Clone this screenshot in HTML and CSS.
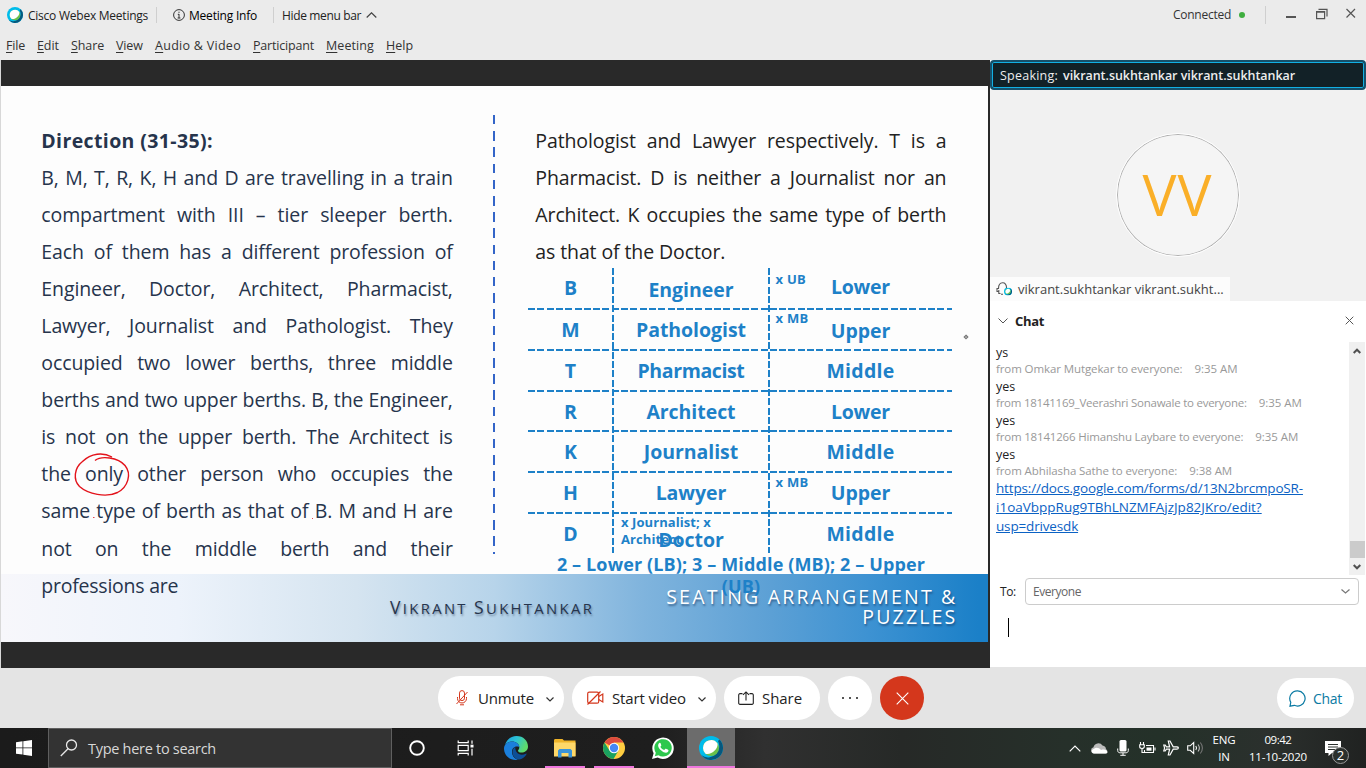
FILE: index.html
```
<!DOCTYPE html>
<html lang="en">
<head>
<meta charset="utf-8">
<title>Cisco Webex Meetings</title>
<link rel="stylesheet" href="styles.css">
</head>
<body>
<svg width="0" height="0" class="defs" aria-hidden="true">
  <defs>
    <linearGradient id="edgeA" x1="0" y1="0" x2="1" y2=".4"><stop offset="0" stop-color="#1b9de2"/><stop offset=".5" stop-color="#2cc3d5"/><stop offset="1" stop-color="#5fdc6a"/></linearGradient>
    <symbol id="webex" viewBox="0 0 24 24">
      <circle cx="12" cy="12" r="12" fill="#00bceb"/>
      <path d="M20.500 3.500A12 12 0 1 1 2.500 19.300A11 11 0 0 0 17 18A11 11 0 0 0 19 5z" fill="#07577d"/>
      <circle cx="12" cy="12" r="8" fill="#6cc04a"/>
      <path d="M4 12A8 8 0 0 1 18.500 7.500C19.500 13 12 19.500 6.500 17.800A8 8 0 0 1 4 12z" fill="#fff"/>
    </symbol>
  </defs>
</svg>

<header class="top">
  <div class="titlebar">
    <svg class="logo" width="16" height="16"><use href="#webex"/></svg>
    <span class="app">Cisco Webex Meetings</span>
    <i class="sep"></i>
    <svg class="info" width="12" height="12" viewBox="0 0 12 12" fill="none" stroke="#333"><circle cx="6" cy="6" r="5.400"/><path d="M6 5v4.200M6 2.700v1.200M4.800 5.300H6M4.600 9h2.800"/></svg>
    <span class="minfo">Meeting Info</span>
    <i class="sep"></i>
    <span class="hide">Hide menu bar</span>
    <svg width="11" height="6" viewBox="0 0 11 6" fill="none" stroke="#444" stroke-width="1.200"><path d="M.7 5.500 5.500.8l4.800 4.700"/></svg>
    <div class="window-state">
      <span class="connected">Connected</span><i class="online"></i><i class="sep wide"></i>
      <svg width="76" height="16" viewBox="0 0 76 16" fill="none" stroke="#555" stroke-width="1.200"><path d="M3 11h10" stroke-width="2"/><path d="M33.600 5.600h8v7h-8zM33 6.200h9M35.500 3.300h8.500v7.200" /><path d="m63.500 3 8.500 8.500m0-8.500-8.500 8.500"/></svg>
    </div>
  </div>
  <nav class="menu">
    <span class="m-file"><u>F</u>ile</span><span class="m-edit"><u>E</u>dit</span><span class="m-share"><u>S</u>hare</span><span class="m-view"><u>V</u>iew</span><span class="m-audio"><u>A</u>udio &amp; Video</span><span class="m-part"><u>P</u>articipant</span><span class="m-meet"><u>M</u>eeting</span><span class="m-help"><u>H</u>elp</span>
  </nav>
</header>

<main class="main">
  <section class="stage">
    <article class="slide">
      <div class="slide-body">
        <div class="col left">
          <p class="heading">Direction (31-35):</p>
          <p>B, M, T, R, K, H and D are travelling in a train</p>
          <p>compartment with III – tier sleeper berth.</p>
          <p>Each of them has a different profession of</p>
          <p>Engineer, Doctor, Architect, Pharmacist,</p>
          <p>Lawyer, Journalist and Pathologist. They</p>
          <p>occupied two lower berths, three middle</p>
          <p>berths and two upper berths. B, the Engineer,</p>
          <p>is not on the upper berth. The Architect is</p>
          <p>the <span class="only">only</span> other person who occupies the</p>
          <p>same type of berth as that of B. M and H are</p>
          <p>not on the middle berth and their</p>
          <p class="last">professions are</p>
        </div>
        <div class="divider"></div>
        <div class="col right">
          <p>Pathologist and Lawyer respectively. T is a</p>
          <p>Pharmacist. D is neither a Journalist nor an</p>
          <p>Architect. K occupies the same type of berth</p>
          <p class="last doctor">as that of the Doctor.</p>
          <div class="grid">
            <div class="row r1"><b>B</b><b class="low">Engineer</b><b class="up lower">Lower</b><small>x UB</small></div>
            <div class="row"><b>M</b><b>Pathologist</b><b class="low">Upper</b><small>x MB</small></div>
            <div class="row"><b>T</b><b class="pharm">Pharmacist</b><b class="mid">Middle</b></div>
            <div class="row"><b>R</b><b>Architect</b><b class="lower">Lower</b></div>
            <div class="row"><b>K</b><b>Journalist</b><b class="mid">Middle</b></div>
            <div class="row r6"><b>H</b><b>Lawyer</b><b>Upper</b><small>x MB</small></div>
            <div class="row r7"><b>D</b><b class="dr">Doctor</b><b class="mid">Middle</b><small class="wide-note">x Journalist; x<br>Architect</small></div>
          </div>
          <div class="summary">2 – Lower (LB); 3 – Middle (MB); 2 – Upper<br>(UB)</div>
        </div>
      </div>
      <footer class="slide-foot">
        <span class="author"><span class="cap">V</span>ikrant <span class="cap">S</span>ukhtankar</span>
        <span class="topic">SEATING ARRANGEMENT &amp;<br>PUZZLES</span>
      </footer>
      <svg class="ink" width="987" height="556" viewBox="1 86 987 556" fill="none">
        <path d="M95 460.500C101 455.500 118 457 125 465.500C132 474 128 487 117.500 492.500C106 498 88 494 79.500 486.500C73 480 74 468 82.500 461.500C91 453 103 452 112 457" stroke="#e3131b" stroke-width="1.400"/>
        <path d="M93 517.500h1.500M312 518.500h1" stroke="#e8434a" stroke-width="1.200"/>
        <path d="m966 335.300 1.700 1.700-1.700 1.700-1.700-1.700z" stroke="#777" stroke-width="1.300"/>
      </svg>
    </article>
  </section>

  <aside class="panel">
    <div class="speaking"><span>Speaking:</span><b>vikrant.sukhtankar vikrant.sukhtankar</b></div>
    <div class="video">
      <div class="avatar"><span>VV</span></div>
      <div class="name">
        <svg width="17" height="14" viewBox="0 0 17 14"><path d="M2.500 9.500H1V6.500h1.500C2.500-1 11-1 10.500 6M4.500 11.500H2.800V8M5 12.300h2" fill="none" stroke="#555" stroke-width="1.100"/><svg x="8" y="5.500" width="8" height="8"><use href="#webex"/></svg></svg>
        <span>vikrant.sukhtankar vikrant.sukht...</span>
      </div>
    </div>
    <div class="chat-head">
      <svg width="10" height="6" viewBox="0 0 10 6" fill="none" stroke="#555"><path d="M.5.5 5 5 9.500.5"/></svg>
      <b>Chat</b>
      <svg class="close" width="9" height="9" viewBox="0 0 9 9" fill="none" stroke="#555"><path d="m.7.700 7.600 7.600m0-7.600L.7 8.300"/></svg>
    </div>
    <div class="chat-body">
      <div class="messages">
        <p>ys</p><p class="from"><span class="f1">from Omkar Mutgekar to everyone:</span><time>9:35 AM</time></p>
        <p>yes</p><p class="from"><span>from 18141169_Veerashri Sonawale to everyone:</span><time>9:35 AM</time></p>
        <p>yes</p><p class="from"><span class="f3">from 18141266 Himanshu Laybare to everyone:</span><time>9:35 AM</time></p>
        <p>yes</p><p class="from"><span class="f1">from Abhilasha Sathe to everyone:</span><time>9:38 AM</time></p>
        <a class="link"><span class="l1">https://docs.google.com/forms/d/13N2brcmpoSR-</span><br>i1oaVbppRug9TBhLNZMFAjzJp82JKro/edit?<br><span class="l1">usp=drivesdk</span></a>
      </div>
      <div class="scroll">
        <svg width="8" height="6" viewBox="0 0 8 6" fill="none" stroke="#505050" stroke-width="2"><path d="M.7 5 4 1.700 7.300 5"/></svg>
        <i class="thumb"></i>
        <svg width="8" height="6" viewBox="0 0 8 6" fill="none" stroke="#505050" stroke-width="2"><path d="M.7 1 4 4.300 7.300 1"/></svg>
      </div>
    </div>
    <div class="to-row">
      <span class="to">To:</span>
      <div class="select"><span>Everyone</span><svg width="9" height="5" viewBox="0 0 9 5" fill="none" stroke="#777" stroke-width="1.200"><path d="M.5.500 4.500 4 8.500.5"/></svg></div>
    </div>
    <div class="compose"><i class="caret"></i></div>
  </aside>
</main>

<div class="controls">
  <div class="buttons">
    <div class="pill unmute">
      <svg width="12" height="16" viewBox="0 0 12 16" fill="none" stroke="#d4371c"><rect x="3.500" y=".6" width="5" height="10" rx="2.500"/><path d="M1.500 7v1.500a4.500 4.500 0 0 0 9 0V7M4 14.800h4M11.500 2 .5 14"/></svg>
      <span>Unmute</span>
      <svg class="chev" width="8" height="5" viewBox="0 0 8 5" fill="none" stroke="#333" stroke-width="1.200"><path d="M.5.500 4 4 7.500.5"/></svg>
    </div>
    <div class="pill video-btn">
      <svg width="17" height="14" viewBox="0 0 17 14" fill="none" stroke="#d4371c" stroke-width="1.200"><rect x=".7" y="1.200" width="11" height="11" rx="1.500"/><path d="M11.700 5.500 15.800 3v8l-4.100-2.500M.5 13.500 13.500.5"/></svg>
      <span>Start video</span>
      <svg class="chev" width="8" height="5" viewBox="0 0 8 5" fill="none" stroke="#333" stroke-width="1.200"><path d="M.5.500 4 4 7.500.5"/></svg>
    </div>
    <div class="pill share-btn">
      <svg width="16" height="14" viewBox="0 0 16 14" fill="none" stroke="#222" stroke-width="1.100"><path d="M4.500 2.600H2A1.300 1.300 0 0 0 .7 4v8A1.300 1.300 0 0 0 2 13.400h12a1.300 1.300 0 0 0 1.300-1.400V4A1.300 1.300 0 0 0 14 2.600h-2.500M8 9.500V1M5 3.800 8 .9l3 2.900"/></svg>
      <span>Share</span>
    </div>
    <div class="round"><i></i><i></i><i></i></div>
    <div class="round leave"><svg width="13" height="13" viewBox="0 0 13 13" stroke="#fff" stroke-width="1.100"><path d="m.7.700 11.600 11.600m0-11.600L.7 12.300"/></svg></div>
  </div>
  <div class="pill chat-btn">
    <svg width="17" height="17" viewBox="0 0 17 17" fill="none" stroke="#0a7aa3" stroke-width="1.200"><path d="M8.700.8a7.600 7.600 0 1 1-3.400 14.500L1 16.200l.8-4A7.600 7.600 0 0 1 8.700.8z"/></svg>
    <span>Chat</span>
  </div>
</div>

<div class="taskbar">
  <div class="start"><svg width="16" height="16" viewBox="0 0 16 16" fill="#fff"><path d="M0 2.200 6.500 1.300v6.200H0zM7.300 1.200 16 0v7.500H7.300zM0 8.300h6.500v6.300L0 13.700zM7.300 8.300H16V16l-8.700-1.200z"/></svg></div>
  <div class="search">
    <svg width="18" height="18" viewBox="0 0 18 18" fill="none" stroke="#e8e8e8" stroke-width="1.300"><circle cx="11.500" cy="6" r="5"/><path d="M8 9.700.8 17"/></svg>
    <span>Type here to search</span>
  </div>
  <div class="tile"><svg width="16" height="16" viewBox="0 0 16 16"><circle cx="8" cy="8" r="6.800" fill="none" stroke="#fff" stroke-width="1.900"/></svg></div>
  <div class="tile views"><svg width="17" height="16" viewBox="0 0 17 16" fill="none" stroke="#fff" stroke-width="1.200"><path d="M1.200.5v2.200h10V.5M1.200 5.300h10v5.400h-10zM1.200 15.500v-2.200h10v2.200M15 .5v3.300M15 8.700v6.800"/><path d="M13.500 4.700h3v2.800h-3z" fill="#fff" stroke="none"/></svg></div>
  <div class="tile">
    <svg width="24" height="24" viewBox="0 0 24 24"><path d="M1 9C3 3 7.500 0 12.500 0 19.500 0 24 5 24 10.500c0 4-3.500 6-6.500 6-2.500 0-3.500-1-3.500-1.800 0-.7 1.300-1.200 1.300-3.500C15.300 8 12 5.500 8 5.500 5 5.500 2.500 7 1 9z" fill="url(#edgeA)"/><path d="M1 9C2.500 7 5 5.500 8 5.500c4 0 7.300 2.500 7.300 5.500C11 9.500 8 12 8 16c0 4 3 7.500 7 7.600C7 25.500 0 20 0 12.500 0 11 .5 10 1 9z" fill="#1b7fdb"/><path d="M11.300 11C8.500 12.500 7.500 16.500 9.500 20c1.500 2.700 4 3.800 6 3.500 3.500-.8 5.500-3 7-5.300.3-.6-.2-.8-.7-.5C16 20.500 11 17 11.300 11z" fill="#0d4f97"/></svg>
  </div>
  <div class="tile running">
    <svg width="22" height="19" viewBox="0 0 22 19"><path d="M0 1.500C0 .5.5 0 1.500 0h7L10 1.500h11.500V17H0z" fill="#f0b429"/><path d="M0 3.500h21.500v14H0z" fill="#ffd869"/><path d="M4 18.500v-7L5.500 10h11l1.500 1.500v7h-3.500V14h-7v4.500z" fill="#3b94d9"/></svg>
  </div>
  <div class="tile running">
    <svg width="22" height="22" viewBox="0 0 22 22"><circle cx="11" cy="11" r="11" fill="#ffcd41"/><path d="M11 11 1.500 5.500A11 11 0 0 1 20.500 5.500H11z" fill="#dd4b3e"/><path d="M1.500 5.500A11 11 0 0 0 10.500 22L15.500 13.500H6.500z" fill="#1aa15f"/><circle cx="11" cy="11" r="5.200" fill="#fff"/><circle cx="11" cy="11" r="4.200" fill="#4687f4"/></svg>
  </div>
  <div class="tile">
    <svg width="22" height="22" viewBox="0 0 22 22"><path d="M0 22 1.600 16.300A10.700 10.700 0 1 1 5.700 20.500z" fill="#fff"/><path d="m2.800 19.200 1-3.500a8.700 8.700 0 1 1 2.700 2.600z" fill="#2dc84d"/><path d="M7.300 6c-2.300 2-.8 5.200 2 7.600 2.600 2.300 5.400 3 6.700 1.200.8-1.200.6-1.700-.2-2.200-2-1-2.100-1.200-2.800-.4-.7.900-.9.900-2 .3-1.200-.7-2.300-2-2.600-2.800.6-.8 1.100-1 .8-1.800C8.600 6.200 8.400 5.300 7.300 6z" fill="#fff"/></svg>
  </div>
  <div class="tile active"><svg width="24" height="24"><use href="#webex"/></svg></div>
  <div class="tray">
    <svg width="12" height="7" viewBox="0 0 12 7" fill="none" stroke="#fff" stroke-width="1.200"><path d="M.7 6.300 6 1l5.300 5.300"/></svg>
    <svg class="t-cloud" width="17" height="11" viewBox="0 0 17 11"><path d="M3 10.500A3.200 3.200 0 0 1 2.500 4.200 5 5 0 0 1 11.500 2.500 4 4 0 0 1 15 6.300 2.200 2.200 0 0 1 14.500 10.500z" fill="#bbb"/><path d="M3 10.500C0 10.500 0 6.500 3 5.800 5 4 8 4.500 10 7c4-1 5.500 0 6.500 2 0 1-1 1.500-2 1.500z" fill="#fff"/></svg>
    <svg class="t-mic" width="12" height="16" viewBox="0 0 12 16"><rect x="2.500" width="7" height="11.500" rx="1.500" fill="#fff"/><path d="M.7 8.500v2c0 1.500 1 2.300 2.500 2.300h5.600c1.500 0 2.500-.8 2.500-2.300v-2M6 13v2.200M3.300 15.300h5.400" fill="none" stroke="#fff"/></svg>
    <svg class="t-bat" width="17" height="12" viewBox="0 0 17 12" fill="none" stroke="#fff" stroke-width="1.100"><path d="M7 3.500h7.500v7h-9V8M16 5.500v3M1.500 0v2.500M4.500 0v2.500M.7 2.800h4.600v2C5.300 7 .7 7 .7 4.800zM3 6.500v4h2"/><path d="M7.500 5.500h5v3.200h-5z" fill="#fff" stroke="none"/></svg>
    <svg class="t-air" width="16" height="16" viewBox="0 0 16 16" fill="none" stroke="#fff" stroke-width="1.200"><path d="M15.300 8c0-.8-.6-1.200-1.500-1.200h-3.600L7 1H5.300l1.300 5.800H3.400L2.200 5H.8l.8 3-.8 3h1.400l1.200-1.800h3.200L5.300 15H7l3.200-5.800h3.600c.9 0 1.500-.4 1.500-1.200z"/></svg>
    <svg class="t-vol" width="17" height="14" viewBox="0 0 17 14" fill="none" stroke="#fff" stroke-width="1.100"><path d="M.7 4.800h2.500L6.700 1.500v11L3.200 9.300H.7zM8.800 5c.9 1.200.9 2.800 0 4"/><path d="M11 3.500c1.600 2 1.600 5 0 7" stroke="#bbb"/><path d="M13.300 1.500c2.800 3.200 2.800 7.800 0 11" stroke="#777"/></svg>
    <div class="lang">ENG<br>IN</div>
    <div class="clock"><span>09:42</span><br>11-10-2020</div>
    <div class="notif"><svg width="16" height="15" viewBox="0 0 16 15"><path d="M0 0h16v12H7l-3.500 3v-3H0z" fill="#fff"/><path d="M3 3.500h10M3 6h10M3 8.500h7" stroke="#2b302d"/></svg><span class="badge">2</span></div>
  </div>
</div>
</body>
</html>
```
FILE: styles.css
```
* { box-sizing: border-box; }
html, body { height: 100%; }
body {
  margin: 0;
  width: 1366px;
  height: 768px;
  overflow: hidden;
  display: flex;
  flex-direction: column;
  font-family: "Open Sans", "Noto Sans", sans-serif;
  font-size: 12px;
  color: #222;
  background: #e4e4e4;
}
p { margin: 0; }
i { font-style: normal; }
svg { flex: none; display: block; }
span, b, time { white-space: nowrap; }
.defs { position: absolute; }

/* Title bar and menu */
.top { height: 60px; background: #ebebeb; flex: none; }
.titlebar { height: 30px; display: flex; align-items: center; padding-left: 7px; }
.app { margin-left: 5px; width: 128px; letter-spacing: -.24px; }
.sep { width: 1px; height: 16px; background: #cfcfcf; }
.info { margin-left: 16px; }
.minfo { margin-left: 4px; width: 84px; letter-spacing: -.21px; color: #000; }
.hide { margin-left: 8px; width: 84px; letter-spacing: -.36px; }
.window-state { display: flex; align-items: center; margin: 0 6px 0 auto; height: 28px; align-self: flex-start; }
.connected { letter-spacing: -.26px; color: #333; }
.online { width: 6px; height: 6px; border-radius: 50%; background: #3fae3f; margin: 2px 19px 0 8px; }
.sep.wide { height: 18px; margin: 2px 17px 0 1px; }
.window-state svg { margin-right: 1px; }
.menu { height: 30px; display: flex; align-items: center; padding-left: 6px; font-size: 12.5px; color: #333; }
.menu u { text-underline-offset: 2px; }
.m-file { width: 31px; letter-spacing: -.2px; }
.m-edit { width: 34px; letter-spacing: -.1px; }
.m-share { width: 45px; letter-spacing: -.1px; }
.m-view { width: 39px; letter-spacing: -.15px; }
.m-audio { width: 98px; letter-spacing: .28px; }
.m-part { width: 73px; letter-spacing: -.19px; }
.m-meet { width: 60px; letter-spacing: .09px; }

/* Shared slide */
.main { height: 608px; display: flex; flex: none; }
.stage { width: 990px; background: #292929; padding: 26px 2px 26px 0; border-left: 1px solid #d8d8d8; }
.slide { position: relative; height: 556px; background: #fdfdfd; display: flex; flex-direction: column; }
.slide-body { position: relative; z-index: 1; height: 488px; display: flex; font-size: 19.5px; line-height: 37.1px; }
.col p { text-align: justify; text-align-last: justify; height: 37.1px; white-space: nowrap; }
.col p.last, .col p.heading { text-align-last: left; }
.left { width: 411.500px; margin-left: 40.300px; padding-top: 35.500px; color: #26344c; }
.left p { letter-spacing: -.1px; }
.left p.heading { font-weight: 700; letter-spacing: .38px; }
.left p.last { letter-spacing: -.23px; }
.divider {
  width: 2.500px; height: 439px; margin: 29px 0 0 40.200px;
  background: repeating-linear-gradient(#3465c8 0 9.500px, transparent 9.500px 16.200px);
}
.right { width: 424px; margin-left: 32.500px; padding-top: 35.500px; color: #222; }
.right p { margin: 0 5.500px 0 7.300px; letter-spacing: -.1px; }
.grid {
  margin-top: -1.400px; width: 424px; height: 285px; display: flex; flex-direction: column;
  background:
    repeating-linear-gradient(#1e81c8 0 7px, transparent 7px 9.300px) 84px 0 / 2px 100% no-repeat,
    repeating-linear-gradient(#1e81c8 0 7px, transparent 7px 9.300px) 240px 0 / 2px 100% no-repeat;
}
.row {
  position: relative; height: 40.800px; line-height: 40.600px; display: grid; grid-template-columns: 85px 156px 183px; flex: none;
  text-align: center; color: #1e81c8;
  background: repeating-linear-gradient(90deg, #1e81c8 0 7px, transparent 7px 9.300px) 0 100% / 100% 2px no-repeat;
}
.row b { letter-spacing: -.05px; }
.row b.mid { letter-spacing: .25px; }
.row b.lower { letter-spacing: -.23px; }
.row b.pharm { letter-spacing: -.38px; }
.row b.low { padding-top: 1.500px; }
.row b.up { margin-top: -1px; }
.row b.dr { padding-top: 6px; }
.r1 { height: 41.500px; }
.r7 { background: none; }
.row small { position: absolute; left: 247.500px; top: 0; font-size: 13px; font-weight: 700; line-height: 17px; text-align: left; letter-spacing: .3px; }
.r1 small { top: 3px; }
.r6 small { top: 1px; }
.row small.wide-note { left: 93px; top: 0; white-space: nowrap; letter-spacing: .08px; }
.summary { font-size: 18px; font-weight: 700; letter-spacing: .13px; line-height: 22px; text-align: center; color: #1e81c8; padding-left: 2px; margin-top: -.8px; white-space: nowrap; }
.slide-foot {
  position: relative; z-index: 0; height: 68px; display: flex;
  background: linear-gradient(90deg, #f7f7fb 0, #edf3fb 18%, #d5e4f0 36%, #b7d4ea 50%, #80b4dd 65%, #5ca0d5 78%, #3d92d2 88%, #1b80c8 99%);
}
.author { margin-left: 389px; line-height: 66px; font-size: 14.800px; text-transform: uppercase; letter-spacing: 2.350px; color: #26344c; text-shadow: 1px 2px 2px rgba(40,60,90,.45); width: 220px; }
.cap { font-size: 17.500px; }
.topic { margin-left: auto; margin-right: 30.500px; padding-top: 13px; font-size: 19.500px; line-height: 20px; letter-spacing: 2.180px; text-align: right; color: #fff; text-shadow: 1px 2px 2px rgba(20,50,90,.55); }
.ink { position: absolute; left: 0; top: 0; z-index: 3; }

/* Side panel */
.panel { width: 376px; background: #fff; display: flex; flex-direction: column; border-bottom: 1px solid #e4e4e4; }
.speaking { height: 30px; padding-left: 8px; display: flex; align-items: center; gap: 5px; border: 2px solid #17506a; border-radius: 4px; box-shadow: inset 0 0 0 1px #12b0e4; background: #122127; color: #ededed; font-size: 12.500px; flex: none; }
.speaking span { letter-spacing: .23px; }
.speaking b { font-weight: 600; letter-spacing: -.05px; }
.video { height: 211px; background: #f1f1f1; flex: none; display: flex; flex-direction: column; justify-content: space-between; }
.avatar { width: 124px; height: 124px; margin: 43px 0 0 125.500px; border-radius: 50%; border: 1px solid #fff; background: #f5f5f5; box-shadow: inset 0 0 0 1px #b0b0b0; display: flex; justify-content: center; align-items: center; color: #faaf28; font-size: 57px; line-height: 60px; letter-spacing: 1px; padding-bottom: 2px; }
.name { width: 240px; height: 24px; background: #fcfcfc; display: flex; align-items: center; gap: 5px; padding-left: 6px; font-size: 13px; color: #444; }
.chat-head { height: 41px; display: flex; align-items: center; padding: 0 12px 2px 8px; flex: none; }
.chat-head b { font-size: 13px; letter-spacing: -.33px; margin-left: 7px; }
.close { margin-left: auto; }
.chat-body { height: 233px; display: flex; justify-content: space-between; flex: none; }
.messages { padding: 2px 0 0 6px; font-size: 12.500px; line-height: 17px; }
.messages p { height: 17px; }
.messages .from { font-size: 11.500px; line-height: 16px; color: #999; display: flex; gap: 12px; letter-spacing: -.24px; }
.messages .f1 { letter-spacing: -.1px; }
.messages .f3 { letter-spacing: -.18px; }
.from time { letter-spacing: -.05px; }
.link { display: block; margin-top: -1px; font-size: 13.500px; line-height: 18.800px; color: #0b62c4; text-decoration: underline; white-space: nowrap; }
.l1 { letter-spacing: -.16px; }
.scroll { width: 16px; margin-right: 1px; padding: 6px 0 5px; background: #f0f0f0; display: flex; flex-direction: column; align-items: center; }
.thumb { width: 15px; height: 17px; margin: auto 0 6px; background: #cbcbcb; }
.to-row { height: 27px; margin: 3px 7px 0 10px; display: flex; align-items: center; flex: none; }
.to { width: 25px; letter-spacing: -.4px; }
.select { flex: 1; height: 27px; border: 1px solid #ccc; border-radius: 4px; display: flex; align-items: center; justify-content: space-between; padding: 0 8px 0 7px; color: #666; letter-spacing: -.46px; }
.compose { padding: 13px 0 0 18px; }
.caret { display: block; width: 1px; height: 19px; background: #000; }

/* Meeting controls */
.controls { height: 60px; display: flex; align-items: center; background: #e4e4e4; flex: none; }
.buttons { display: flex; gap: 8px; margin-left: 438px; }
.pill { height: 44px; border-radius: 22px; background: #fff; display: flex; align-items: center; font-size: 15px; }
.unmute { width: 126px; padding-left: 18px; }
.unmute span { margin-left: 10px; width: 68px; letter-spacing: -.17px; }
.video-btn { width: 144px; padding-left: 15px; }
.video-btn span { margin-left: 8px; width: 86px; letter-spacing: -.11px; }
.chev { margin-top: 2px; }
.share-btn { width: 96px; padding-left: 14px; }
.share-btn span { margin-left: 8px; letter-spacing: -.06px; }
.round { width: 44px; height: 44px; border-radius: 50%; background: #fff; display: flex; gap: 5px; align-items: center; justify-content: center; }
.round i { width: 2px; height: 2px; background: #555; }
.leave { background: #d4371c; }
.chat-btn { width: 77px; height: 40px; margin: 0 12px 0 auto; padding-left: 12px; color: #0a7aa3; font-size: 14px; }
.chat-btn span { margin-left: 7px; letter-spacing: -.3px; }

/* Taskbar */
.taskbar { height: 40px; display: flex; flex: none; color: #fff; background: linear-gradient(90deg, #1b1b1b 0, #1e1e1e 48%, #303030 56%, #262927 66%, #26302a 78%, #243129 85%, #2b302d 93%, #202221 100%); }
.start { width: 48px; display: flex; align-items: center; justify-content: center; }
.search { width: 344px; border: 1px solid #5f5f5f; background: #333; display: flex; align-items: center; padding-left: 11px; font-size: 14.500px; color: #d8d8d8; }
.search span { margin-left: 10px; letter-spacing: -.29px; }
.tile { width: 49px; height: 40px; display: flex; align-items: center; justify-content: center; background: linear-gradient(#ee76dd, #ee76dd) 50% 100% / 0 0 no-repeat; }
.views { padding-right: 2px; }
.views.tile { width: 50px; }
.running { background-size: 40px 2px; }
.active { width: 48px; background-color: #6c6c6c; background-size: 100% 2px; }
.tray { margin-left: auto; display: flex; align-items: center; padding-right: 25px; }
.t-cloud { margin-left: 10px; }
.t-mic { margin-left: 9px; }
.t-bat { margin-left: 10px; }
.t-air { margin-left: 7px; }
.t-vol { margin-left: 8px; }
.lang, .clock { font-size: 11.500px; line-height: 17px; text-align: center; letter-spacing: -.14px; }
.lang { width: 24px; margin-left: 8px; }
.clock { width: 60px; margin-left: 12px; letter-spacing: -.2px; white-space: nowrap; }
.clock span { letter-spacing: -.47px; }
.notif { position: relative; margin-left: 17px; }
.badge { position: absolute; left: 7px; top: 6px; width: 17px; height: 17px; border-radius: 50%; border: 1px solid #999; background: #2b302d; font-size: 13px; line-height: 15px; text-align: center; }
```
